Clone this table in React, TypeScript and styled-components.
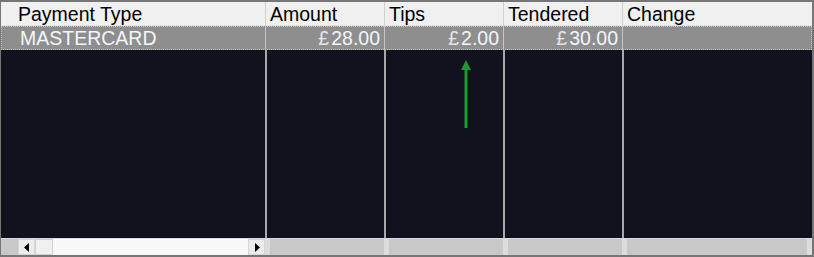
import React from 'react';
import styled, { createGlobalStyle } from 'styled-components';

const GlobalStyle = createGlobalStyle`
  html, body {
    margin: 0;
    padding: 0;
    background: #ffffff;
  }
`;

const COLUMNS = '264px 119px 119px 119px 1fr';

const Frame = styled.div`
  position: relative;
  box-sizing: border-box;
  width: 814px;
  height: 257px;
  border: 1px solid #767676;
  border-top-width: 2px;
  border-bottom-width: 2px;
  border-right-width: 2px;
  background: #12121f;
  font-family: 'Liberation Sans', Arial, sans-serif;
  font-size: 19.5px;
  overflow: hidden;
  display: flex;
  flex-direction: column;
`;

const Row = styled.div<{ $height: number }>`
  display: grid;
  grid-template-columns: ${COLUMNS};
  height: ${p => p.$height}px;
  flex: none;
`;

const HeaderCell = styled.div<{ $first?: boolean }>`
  box-sizing: border-box;
  background: #f0f0f0;
  color: #000;
  line-height: 23px;
  padding: 1px 0 0 ${p => (p.$first ? '17px' : '4px')};
  border-left: ${p => (p.$first ? 'none' : '1px solid #d0d0d0')};
  border-bottom: 1px solid #e2e2e2;
  white-space: nowrap;
  overflow: hidden;
`;

const SelectedRow = styled(Row)`
  outline: 1px dotted #c4c4c4;
  outline-offset: -1px;
  background: #8e8e8e;
`;

const DataCell = styled.div<{ $first?: boolean }>`
  box-sizing: border-box;
  color: #f2f5fb;
  line-height: 23px;
  padding-top: 1px;
  padding-left: ${p => (p.$first ? '19px' : '0')};
  padding-right: ${p => (p.$first ? '0' : '4px')};
  text-align: ${p => (p.$first ? 'left' : 'right')};
  border-left: ${p => (p.$first ? 'none' : '1px solid #c6c6c6')};
  white-space: nowrap;
`;

const Currency = styled.span`
  margin-right: 2px;
  color: #e4e6ea;
`;

const BodyCell = styled.div<{ $first?: boolean }>`
  box-sizing: border-box;
  background: #12121f;
  border-left: ${p => (p.$first ? 'none' : '2px solid #a9a9ad')};
`;

const ScrollRow = styled(Row)`
  border-top: 1px solid #dadada;
  box-sizing: border-box;
  background: #c8c8c8;
`;

const ScrollCell = styled.div<{ $last?: boolean }>`
  box-sizing: border-box;
  background: #c8c8c8;
  border-left: 5px solid #dcdcdc;
  border-right: ${p => (p.$last ? '5px solid #dcdcdc' : 'none')};
`;

const ScrollBar = styled.div`
  display: flex;
  height: 100%;
  background: #c8c8c8;
`;

const ScrollGap = styled.div`
  width: 17px;
  background: #c8c8c8;
`;

const ArrowButton = styled.div`
  box-sizing: border-box;
  width: 17px;
  background: #ececec;
  border: 1px solid #d6d6d6;
  display: flex;
  align-items: center;
  justify-content: center;
`;

const Thumb = styled.div`
  box-sizing: border-box;
  width: 18px;
  background: #f0f0f0;
  border: 1px solid #d0d0d0;
`;

const Track = styled.div`
  flex: 1;
  background: #f8f8f8;
  border-top: 1px solid #ffffff;
`;

const Annotation = styled.svg`
  position: absolute;
  left: 458px;
  top: 56px;
`;

const headers = ['Payment Type', 'Amount', 'Tips', 'Tendered', 'Change'];
const values = ['MASTERCARD', '28.00', '2.00', '30.00', ''];

export default function App() {
  return (
    <>
      <GlobalStyle />
      <Frame>
        <Row $height={24}>
          {headers.map((h, i) => (
            <HeaderCell key={h} $first={i === 0}>
              {h}
            </HeaderCell>
          ))}
        </Row>
        <SelectedRow $height={24}>
          {values.map((v, i) => (
            <DataCell key={i} $first={i === 0}>
              {i > 0 && v ? (
                <>
                  <Currency>£</Currency>
                  {v}
                </>
              ) : (
                v
              )}
            </DataCell>
          ))}
        </SelectedRow>
        <Row $height={188}>
          {headers.map((h, i) => (
            <BodyCell key={h} $first={i === 0} />
          ))}
        </Row>
        <ScrollRow $height={17}>
          <ScrollBar>
            <ScrollGap />
            <ArrowButton>
              <svg width="6" height="9" viewBox="0 0 6 9">
                <path d="M5 0 L0 4.5 L5 9 Z" fill="#000" />
              </svg>
            </ArrowButton>
            <Thumb />
            <Track />
            <ArrowButton>
              <svg width="6" height="9" viewBox="0 0 6 9">
                <path d="M1 0 L6 4.5 L1 9 Z" fill="#000" />
              </svg>
            </ArrowButton>
          </ScrollBar>
          <ScrollCell />
          <ScrollCell />
          <ScrollCell />
          <ScrollCell $last />
        </ScrollRow>
        <Annotation width="14" height="72" viewBox="0 0 14 72">
          <path d="M7 2 L12 12 L2 12 Z" fill="#1d9a33" />
          <rect x="5.5" y="10" width="3" height="60" fill="#1d9a33" />
        </Annotation>
      </Frame>
    </>
  );
}
